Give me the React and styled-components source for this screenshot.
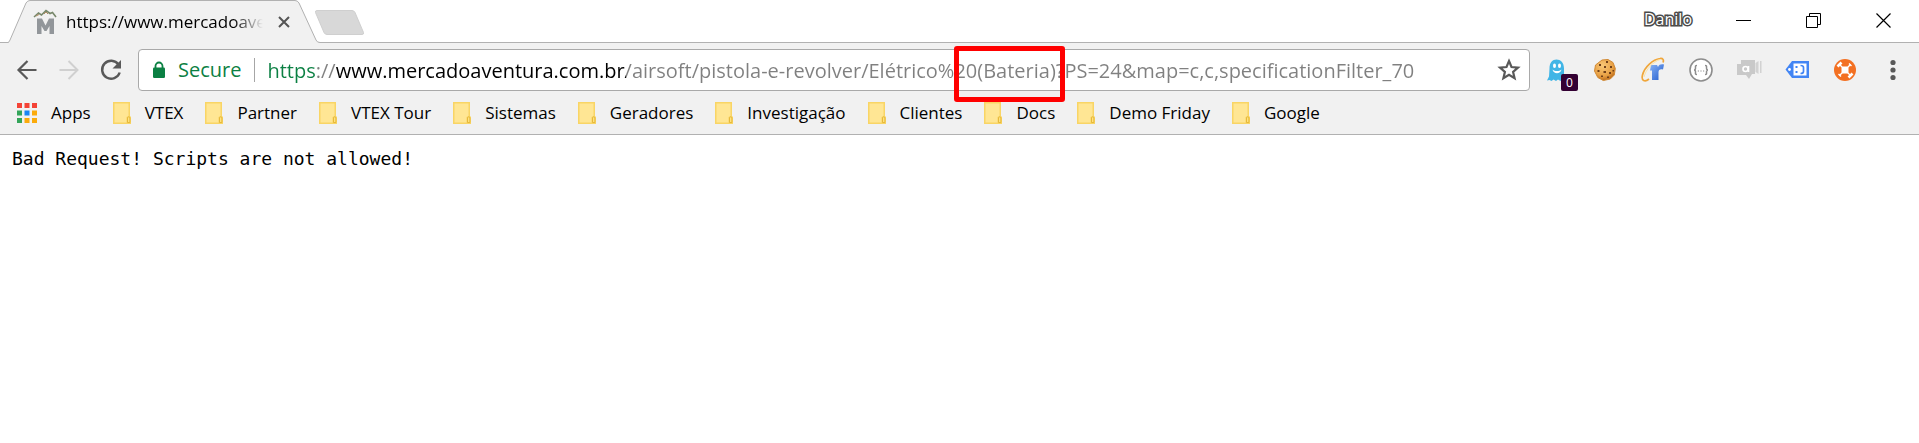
import React from 'react';
import styled, { createGlobalStyle, css } from 'styled-components';

const UI_FONT = '"Open Sans", "Noto Sans", sans-serif';

const GlobalStyle = createGlobalStyle`
  *, *::before, *::after { box-sizing: border-box; }
  body { margin: 0; background: #fff; color: #000; font-family: ${UI_FONT}; }
  svg { display: block; }
`;

const plainButton = css`
  border: 0;
  padding: 0;
  margin: 0;
  background: none;
  color: inherit;
  font: inherit;
  display: flex;
  align-items: center;
  justify-content: center;
`;

/* ---------- Tab strip ---------- */

const TabStrip = styled.header`
  display: flex;
  align-items: flex-start;
  height: 43px;
  padding-left: 8px;
  background: #fff;
  border-bottom: 1px solid #b1b1b1;
`;

const Tab = styled.div`
  position: relative;
  display: flex;
  align-items: center;
  width: 312px;
  height: 43px;
  padding: 1px 27px 0 25px;
`;

const TabShape = styled.svg`
  position: absolute;
  inset: 0;
`;

const TabContent = styled.div`
  position: relative;
  display: flex;
  align-items: center;
  width: 100%;
  height: 40px;
`;

const TabTitle = styled.span`
  flex: 1;
  min-width: 0;
  margin-left: 9px;
  overflow: hidden;
  white-space: nowrap;
  font-size: 17px;
  line-height: 24px;
  mask-image: linear-gradient(to right, #000 calc(100% - 30px), transparent);
`;

const TabClose = styled.button`
  ${plainButton}
  width: 18px;
  height: 24px;
  margin-left: 12px;
`;

const NewTab = styled.button`
  ${plainButton}
  margin: 9px 0 0 -7px;
`;

const WindowControls = styled.div`
  display: flex;
  margin-left: auto;
`;

const ProfileButton = styled.button`
  ${plainButton}
  height: 38px;
  margin-right: 17px;
  font-size: 16px;
  line-height: 24px;
  color: #fff;
  -webkit-text-stroke: 3px #4a4a4a;
  paint-order: stroke fill;
`;

const WindowButton = styled.button`
  ${plainButton}
  width: 70px;
  height: 42px;
`;

/* ---------- Toolbar ---------- */

const Toolbar = styled.nav`
  display: flex;
  align-items: center;
  height: 48px;
  padding: 6px 2px 0 6px;
  background: #f1f1f1;
`;

const NavButton = styled.button`
  ${plainButton}
  width: 42px;
  height: 40px;
  color: ${(p) => (p.$muted ? '#d0d0d0' : '#595959')};
`;

const AddressBar = styled.form`
  position: relative;
  display: flex;
  align-items: center;
  flex: 1;
  min-width: 0;
  height: 42px;
  margin: 0 3px 0 6px;
  padding: 0 8px 0 13px;
  background: #fff;
  border: 1px solid #a9a9a9;
  border-radius: 4px;
`;

const SecureButton = styled.button`
  ${plainButton}
  gap: 12px;
  height: 24px;
  padding-right: 13px;
  border-right: 1px solid #a6a6a6;
  color: #0b8043;
  font-size: 20px;
  line-height: 24px;
`;

const AddressInput = styled.input`
  flex: 1;
  min-width: 0;
  height: 36px;
  margin-left: 12px;
  padding: 0;
  border: 0;
  outline: 0;
  font-family: ${UI_FONT};
  font-size: 20px;
  color: transparent;
  caret-color: #000;
  background: linear-gradient(
    to right,
    #0b8043 48px,
    #808080 48px 69px,
    #000 69px 359px,
    #808080 359px
  );
  background-clip: text;
  -webkit-background-clip: text;
`;

const StarButton = styled.button`
  ${plainButton}
  width: 24px;
  height: 24px;
`;

const Highlight = styled.div`
  position: absolute;
  left: 815px;
  top: -4px;
  width: 111px;
  height: 56px;
  border: 5px solid #f00;
  border-radius: 3px;
  pointer-events: none;
`;

const ExtensionButton = styled.button`
  ${plainButton}
  position: relative;
  width: 48px;
  height: 42px;
`;

const Badge = styled.span`
  position: absolute;
  right: 3px;
  bottom: 0;
  width: 17px;
  height: 17px;
  border-radius: 2px;
  background: #330033;
  color: #fff;
  font-size: 12px;
  line-height: 18px;
  text-align: center;
`;

/* ---------- Bookmarks ---------- */

const BookmarkBar = styled.nav`
  display: flex;
  align-items: center;
  gap: 22px;
  height: 44px;
  padding-left: 17px;
  overflow: hidden;
  background: #f1f1f1;
  border-bottom: 1px solid #b1b1b1;
`;

const Bookmark = styled.a`
  display: flex;
  align-items: center;
  gap: 14px;
  color: #000;
  font-size: 17px;
  line-height: 24px;
  text-decoration: none;
  white-space: nowrap;
`;

const Page = styled.main`
  padding: 12px;
`;

const Message = styled.pre`
  margin: 0;
  font-family: "DejaVu Sans Mono", "Liberation Mono", monospace;
  font-size: 18px;
  line-height: 24px;
`;

/* ---------- Icons ---------- */

const Favicon = () => (
  <svg width="24" height="26" viewBox="0 0 24 26" fill="none">
    <path d="M4 25V9.500h5l3.500 7 3.500-7h5V25h-4.500v-8l-3 5h-2l-3-5v8z" fill="#92969a" />
    <path d="M1 8l4.500-4 3 2L13 1.500l4 3 2.500-1L23 8" stroke="#77876a" strokeWidth="1.600" />
    <path d="M3 7l3-1.500M11 5l2-2 2 2" stroke="#b08b62" strokeWidth="1" />
  </svg>
);

const CloseMark = () => (
  <svg width="12" height="12" viewBox="0 0 12 12">
    <path d="M1 1l10 10M11 1L1 11" stroke="#555" strokeWidth="2" />
  </svg>
);

const BackIcon = () => (
  <svg width="22" height="22" viewBox="0 0 22 22" fill="none" stroke="currentColor" strokeWidth="2.200">
    <path d="M20.500 11H2.500M11.500 2L2.500 11l9 9" />
  </svg>
);

const ForwardIcon = () => (
  <svg width="22" height="22" viewBox="0 0 22 22" fill="none" stroke="currentColor" strokeWidth="2">
    <path d="M1.500 11h18M10.500 2l9 9-9 9" />
  </svg>
);

const ReloadIcon = () => (
  <svg width="22" height="22" viewBox="0 0 22 22" fill="none">
    <path d="M18.500 5.500A9 9 0 1 0 19.700 13.500" stroke="currentColor" strokeWidth="2.400" />
    <path d="M21 1v8.500h-8.500z" fill="currentColor" />
  </svg>
);

const LockIcon = () => (
  <svg width="14" height="18" viewBox="0 0 14 18">
    <path d="M3.500 8V5a3.500 3.500 0 0 1 7 0v3" fill="none" stroke="#0b8043" strokeWidth="1.800" />
    <rect x="1" y="6.500" width="12" height="10.500" rx="1.200" fill="#0b8043" />
  </svg>
);

const StarIcon = () => (
  <svg width="24" height="24" viewBox="0 0 24 24">
    <path
      d="M12 3l2.500 6 6.500.600-4.900 4.300 1.500 6.400L12 16.900l-5.600 3.400 1.500-6.400L3 9.600 9.500 9z"
      fill="none"
      stroke="#595959"
      strokeWidth="2.200"
    />
  </svg>
);

const GhostIcon = () => (
  <svg width="24" height="24" viewBox="0 0 24 24">
    <path
      d="M4.500 10.500C4.500 4.500 7.500 1.500 11.500 1.500s7.500 3 7.500 9V18l2 4-3.500-.500-2 1.500-2.500-1.500-2 1.500-2.500-1.500-2 1.500-2-1-2.500.500 2-4z"
      fill="#41b5e6"
    />
    <ellipse cx="9.500" cy="7.700" rx="1.500" ry="2.200" fill="#fff" />
    <ellipse cx="14.500" cy="7.700" rx="1.500" ry="2.200" fill="#fff" />
    <path d="M7.500 11.500c1 5 8 5 9 0-2.500 2-6.500 2-9 0z" fill="#fff" />
  </svg>
);

const CookieIcon = () => (
  <svg width="24" height="24" viewBox="0 0 24 24">
    <defs>
      <radialGradient id="cookie" cx="0.400" cy="0.300" r="0.700">
        <stop offset="0" stopColor="#f9c878" />
        <stop offset="0.700" stopColor="#e8a044" />
        <stop offset="1" stopColor="#bd6c1c" />
      </radialGradient>
    </defs>
    <path d="M9 2l6-.500 5 3 2.300 6-1 6.500-4 4-7 1.500-5.500-3L1.500 13l1-6z" fill="url(#cookie)" stroke="#d18a35" strokeWidth="1" strokeLinejoin="round" />
    <g fill="#714019">
      <rect x="6" y="6" width="2" height="2" />
      <rect x="13" y="3" width="2" height="2" />
      <rect x="11" y="8" width="2" height="2" />
      <rect x="17" y="8" width="2" height="2" />
      <rect x="4.500" y="12" width="2" height="2" />
      <rect x="10.500" y="13" width="2.500" height="2" />
      <rect x="16" y="14" width="2" height="2" />
      <rect x="8" y="17.500" width="2" height="1.500" />
      <rect x="14" y="18.500" width="2" height="1.500" />
      <rect x="19.500" y="12" width="1.500" height="1.500" />
    </g>
  </svg>
);

const RingIcon = () => (
  <svg width="24" height="26" viewBox="0 0 24 26" fill="none">
    <defs>
      <linearGradient id="ring" x1="0" y1="0" x2="1" y2="1">
        <stop offset="0" stopColor="#85b1f5" />
        <stop offset="1" stopColor="#215bcc" />
      </linearGradient>
    </defs>
    <path d="M10 8h6l1 2c1-2.500 3-3 6-2.500l-1 5c-3-.500-4.500 0-4.500 3V23H11v-9.500H9z" fill="url(#ring)" />
    <path d="M8 22C4 25.500 0 24 1.500 18 3.500 10 12 2.500 19 1.500c3-.500 4 1.500 3 4" stroke="#f0a63a" strokeWidth="1.700" />
    <path d="M3 20C5 12 12 5 19 2.500" stroke="#ffdf8c" strokeWidth="0.800" />
  </svg>
);

const BracesIcon = () => (
  <svg width="24" height="24" viewBox="0 0 24 24" fill="none" stroke="#8d8d8d">
    <circle cx="12" cy="12" r="11" fill="#fff" strokeWidth="1.600" />
    <path d="M8 7.500c-2 0-1.500 1-1.500 2.500S6 12 5 12c1 0 1.500.500 1.500 2s-.500 2.500 1.500 2.500M16 7.500c2 0 1.500 1 1.500 2.500s.500 2 1.500 2c-1 0-1.500.500-1.500 2s.500 2.500-1.500 2.500" strokeWidth="1.500" />
    <path d="M8.800 13h1.200M11.400 13h1.200M14 13h1.200" strokeWidth="1.200" />
  </svg>
);

const ChatIcon = () => (
  <svg width="26" height="24" viewBox="0 0 26 24">
    <path d="M5 2h14v14h-3l-3 5-3-4H1V6h4z" fill="#c9c9c9" />
    <path d="M19.500 5l3-2v13l-3-2zM24 3h1.500v12H24z" fill="#d2d2d2" />
    <circle cx="9.500" cy="11" r="2.500" fill="none" stroke="#fff" strokeWidth="1.600" />
    <path d="M12.500 8V14" stroke="#fff" strokeWidth="1.600" />
  </svg>
);

const TagIcon = () => (
  <svg width="26" height="24" viewBox="0 0 26 24" fill="none">
    <path d="M1.500 11.500L8 3h17v17H8z" fill="#4285f4" />
    <rect x="9.500" y="5.500" width="13" height="12" fill="#fff" />
    <circle cx="5.500" cy="11.500" r="1.400" fill="#fff" />
    <path d="M11.500 8h2v2h-2zM11.500 13h2v2h-2z" fill="#4285f4" />
    <path d="M16.500 7.500q3 0 3 2v4q0 2-3 2" stroke="#4285f4" strokeWidth="1.700" />
  </svg>
);

const DroneIcon = () => (
  <svg width="24" height="24" viewBox="0 0 24 24" fill="none">
    <circle cx="12" cy="12" r="11" fill="#f37022" />
    <rect x="8.500" y="8.500" width="7" height="7" rx="1.500" fill="#fff" />
    <path d="M6.500 6.500l11 11M17.500 6.500l-11 11" stroke="#fff" strokeWidth="1.400" />
    <path d="M4.500 8.500l4-4M15.500 19.500l4-4" stroke="#fff" strokeWidth="2.600" />
    <path d="M16 5.500l2.500 2.500M5.500 16l2.500 2.500" stroke="#fff" strokeWidth="1.400" />
  </svg>
);

const DotsIcon = () => (
  <svg width="6" height="22" viewBox="0 0 6 22" fill="#595959">
    <circle cx="3" cy="3.500" r="2.600" />
    <circle cx="3" cy="11" r="2.600" />
    <circle cx="3" cy="18.500" r="2.600" />
  </svg>
);

const APP_COLORS = ['#f44336', '#f44336', '#f44336', '#34a55a', '#1a86f5', '#fbab0c', '#34a55a', '#fbab0c', '#fbab0c'];

const AppsIcon = () => (
  <svg width="20" height="20" viewBox="0 0 20 20">
    {APP_COLORS.map((fill, i) => (
      <rect key={i} x={(i % 3) * 7.5} y={Math.floor(i / 3) * 7.5} width="5" height="5" fill={fill} />
    ))}
  </svg>
);

const FolderIcon = () => (
  <svg width="18" height="22" viewBox="0 0 18 22">
    <path d="M0 0h17v14.500h1V22H0z" fill="#f9d565" />
    <path d="M1.500 1.500h14V14l-2 1v5.500h-12z" fill="#ffe694" />
    <path d="M14.500 20.500V16a1.200 1.200 0 0 1 2.400 0v4.500z" fill="#ffe27f" stroke="#e6b93b" strokeWidth="1" />
  </svg>
);

const BOOKMARKS = [
  'VTEX', 'Partner', 'VTEX Tour', 'Sistemas', 'Geradores',
  'Investigação', 'Clientes', 'Docs', 'Demo Friday', 'Google',
];

const EXTENSIONS = [
  { label: 'Ghost', Icon: GhostIcon, badge: '0' },
  { label: 'Cookies', Icon: CookieIcon },
  { label: 'Compatibility', Icon: RingIcon },
  { label: 'JSON', Icon: BracesIcon },
  { label: 'Chat', Icon: ChatIcon },
  { label: 'Tag', Icon: TagIcon },
  { label: 'Drone', Icon: DroneIcon },
  { label: 'Menu', Icon: DotsIcon },
];

const URL_TEXT =
  'https://www.mercadoaventura.com.br/airsoft/pistola-e-revolver/Elétrico%20(Bateria)?PS=24&map=c,c,specificationFilter_70';

export default function App() {
  return (
    <>
      <GlobalStyle />
      <TabStrip>
        <Tab>
          <TabShape width="312" height="43" viewBox="0 0 312 43">
            <path
              d="M0 43V42.500Q1 42.500 2 40L18 3Q19.500.500 22 .500H287Q289.500.500 291 3L308 40Q309 42.500 312 42.500V43z"
              fill="#f1f1f1"
            />
            <path
              d="M0 42.500Q1 42.500 2 40L18 3Q19.500.500 22 .500H287Q289.500.500 291 3L308 40Q309 42.500 312 42.500"
              fill="none"
              stroke="#b1b1b1"
            />
          </TabShape>
          <TabContent>
            <Favicon />
            <TabTitle>https://www.mercadoave</TabTitle>
            <TabClose aria-label="Close tab"><CloseMark /></TabClose>
          </TabContent>
        </Tab>
        <NewTab aria-label="New tab">
          <svg width="52" height="27" viewBox="0 0 52 27">
            <path d="M4 1.500h35q2 0 3 2l8.500 20q.500 2-1.500 2H14q-2 0-3-2L2.500 3.500q-.500-2 1.500-2z" fill="#d8d8d8" stroke="#cfcfcf" />
          </svg>
        </NewTab>
        <WindowControls>
          <ProfileButton>Danilo</ProfileButton>
          <WindowButton aria-label="Minimize">
            <svg width="16" height="16"><path d="M0 7.500h15" stroke="#000" /></svg>
          </WindowButton>
          <WindowButton aria-label="Restore">
            <svg width="16" height="16" fill="none" stroke="#000">
              <path d="M.500 3.500h11v11H.500zM3.500 3.500v-3h11v11h-3" />
            </svg>
          </WindowButton>
          <WindowButton aria-label="Close">
            <svg width="16" height="16"><path d="M.500.500l14 14M14.500.500l-14 14" stroke="#000" strokeWidth="1.200" /></svg>
          </WindowButton>
        </WindowControls>
      </TabStrip>

      <Toolbar>
        <NavButton aria-label="Back"><BackIcon /></NavButton>
        <NavButton aria-label="Forward" $muted><ForwardIcon /></NavButton>
        <NavButton aria-label="Reload"><ReloadIcon /></NavButton>
        <AddressBar onSubmit={(e) => e.preventDefault()}>
          <SecureButton type="button"><LockIcon />Secure</SecureButton>
          <AddressInput aria-label="Address" defaultValue={URL_TEXT} spellCheck={false} />
          <StarButton type="button" aria-label="Bookmark this page"><StarIcon /></StarButton>
          <Highlight />
        </AddressBar>
        {EXTENSIONS.map(({ label, Icon, badge }) => (
          <ExtensionButton key={label} aria-label={label}>
            <Icon />
            {badge && <Badge>{badge}</Badge>}
          </ExtensionButton>
        ))}
      </Toolbar>

      <BookmarkBar>
        <Bookmark href="#apps"><AppsIcon />Apps</Bookmark>
        {BOOKMARKS.map((name) => (
          <Bookmark key={name} href="#bookmark"><FolderIcon />{name}</Bookmark>
        ))}
      </BookmarkBar>

      <Page>
        <Message>Bad Request! Scripts are not allowed!</Message>
      </Page>
    </>
  );
}
